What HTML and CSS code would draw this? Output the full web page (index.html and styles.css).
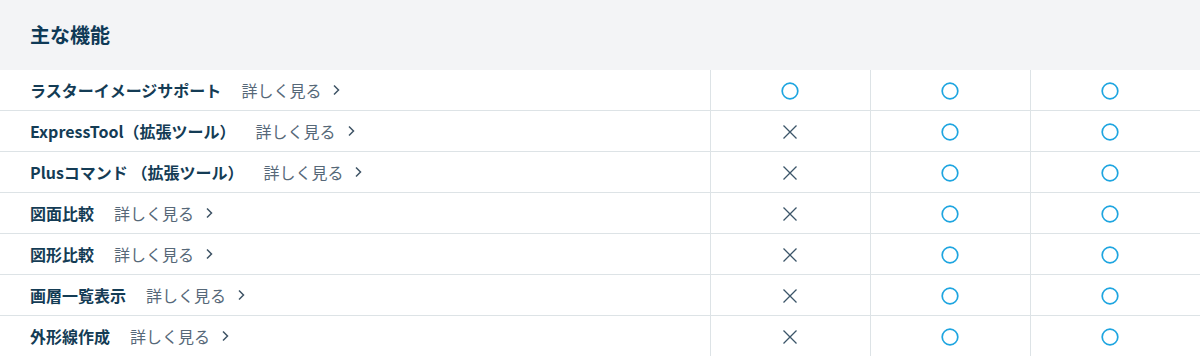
FILE: index.html
```html
<!DOCTYPE html>
<html lang="ja">
<head>
<meta charset="utf-8">
<link rel="stylesheet" href="styles.css">
</head>
<body>
<section class="features">
  <div class="features-head">
    <h2 class="features-title">主な機能</h2>
  </div>
  <div class="features-table">
    <div class="row">
      <div class="cell name"><span class="label">ラスターイメージサポート</span><a class="more" href="#">詳しく見る<svg class="chev" viewBox="0 0 8 12" width="8" height="12"><path d="M2 1.5 L6.5 6 L2 10.5" fill="none" stroke="currentColor" stroke-width="1.5"/></svg></a></div>
      <div class="cell mark"><svg class="yes" viewBox="0 0 20 20" width="20" height="20"><circle cx="10" cy="10" r="7.8" fill="none" stroke="currentColor" stroke-width="1.7"/></svg></div>
      <div class="cell mark"><svg class="yes" viewBox="0 0 20 20" width="20" height="20"><circle cx="10" cy="10" r="7.8" fill="none" stroke="currentColor" stroke-width="1.7"/></svg></div>
      <div class="cell mark"><svg class="yes" viewBox="0 0 20 20" width="20" height="20"><circle cx="10" cy="10" r="7.8" fill="none" stroke="currentColor" stroke-width="1.7"/></svg></div>
    </div>
    <div class="row">
      <div class="cell name"><span class="label">ExpressTool（拡張ツール）</span><a class="more" href="#">詳しく見る<svg class="chev" viewBox="0 0 8 12" width="8" height="12"><path d="M2 1.5 L6.5 6 L2 10.5" fill="none" stroke="currentColor" stroke-width="1.5"/></svg></a></div>
      <div class="cell mark"><svg class="no" viewBox="0 0 20 20" width="20" height="20"><path d="M3.5 3.5 L16.5 16.5 M16.5 3.5 L3.5 16.5" fill="none" stroke="currentColor" stroke-width="1.3"/></svg></div>
      <div class="cell mark"><svg class="yes" viewBox="0 0 20 20" width="20" height="20"><circle cx="10" cy="10" r="7.8" fill="none" stroke="currentColor" stroke-width="1.7"/></svg></div>
      <div class="cell mark"><svg class="yes" viewBox="0 0 20 20" width="20" height="20"><circle cx="10" cy="10" r="7.8" fill="none" stroke="currentColor" stroke-width="1.7"/></svg></div>
    </div>
    <div class="row">
      <div class="cell name"><span class="label">Plusコマンド （拡張ツール）</span><a class="more" href="#">詳しく見る<svg class="chev" viewBox="0 0 8 12" width="8" height="12"><path d="M2 1.5 L6.5 6 L2 10.5" fill="none" stroke="currentColor" stroke-width="1.5"/></svg></a></div>
      <div class="cell mark"><svg class="no" viewBox="0 0 20 20" width="20" height="20"><path d="M3.5 3.5 L16.5 16.5 M16.5 3.5 L3.5 16.5" fill="none" stroke="currentColor" stroke-width="1.3"/></svg></div>
      <div class="cell mark"><svg class="yes" viewBox="0 0 20 20" width="20" height="20"><circle cx="10" cy="10" r="7.8" fill="none" stroke="currentColor" stroke-width="1.7"/></svg></div>
      <div class="cell mark"><svg class="yes" viewBox="0 0 20 20" width="20" height="20"><circle cx="10" cy="10" r="7.8" fill="none" stroke="currentColor" stroke-width="1.7"/></svg></div>
    </div>
    <div class="row">
      <div class="cell name"><span class="label">図面比較</span><a class="more" href="#">詳しく見る<svg class="chev" viewBox="0 0 8 12" width="8" height="12"><path d="M2 1.5 L6.5 6 L2 10.5" fill="none" stroke="currentColor" stroke-width="1.5"/></svg></a></div>
      <div class="cell mark"><svg class="no" viewBox="0 0 20 20" width="20" height="20"><path d="M3.5 3.5 L16.5 16.5 M16.5 3.5 L3.5 16.5" fill="none" stroke="currentColor" stroke-width="1.3"/></svg></div>
      <div class="cell mark"><svg class="yes" viewBox="0 0 20 20" width="20" height="20"><circle cx="10" cy="10" r="7.8" fill="none" stroke="currentColor" stroke-width="1.7"/></svg></div>
      <div class="cell mark"><svg class="yes" viewBox="0 0 20 20" width="20" height="20"><circle cx="10" cy="10" r="7.8" fill="none" stroke="currentColor" stroke-width="1.7"/></svg></div>
    </div>
    <div class="row">
      <div class="cell name"><span class="label">図形比較</span><a class="more" href="#">詳しく見る<svg class="chev" viewBox="0 0 8 12" width="8" height="12"><path d="M2 1.5 L6.5 6 L2 10.5" fill="none" stroke="currentColor" stroke-width="1.5"/></svg></a></div>
      <div class="cell mark"><svg class="no" viewBox="0 0 20 20" width="20" height="20"><path d="M3.5 3.5 L16.5 16.5 M16.5 3.5 L3.5 16.5" fill="none" stroke="currentColor" stroke-width="1.3"/></svg></div>
      <div class="cell mark"><svg class="yes" viewBox="0 0 20 20" width="20" height="20"><circle cx="10" cy="10" r="7.8" fill="none" stroke="currentColor" stroke-width="1.7"/></svg></div>
      <div class="cell mark"><svg class="yes" viewBox="0 0 20 20" width="20" height="20"><circle cx="10" cy="10" r="7.8" fill="none" stroke="currentColor" stroke-width="1.7"/></svg></div>
    </div>
    <div class="row">
      <div class="cell name"><span class="label">画層一覧表示</span><a class="more" href="#">詳しく見る<svg class="chev" viewBox="0 0 8 12" width="8" height="12"><path d="M2 1.5 L6.5 6 L2 10.5" fill="none" stroke="currentColor" stroke-width="1.5"/></svg></a></div>
      <div class="cell mark"><svg class="no" viewBox="0 0 20 20" width="20" height="20"><path d="M3.5 3.5 L16.5 16.5 M16.5 3.5 L3.5 16.5" fill="none" stroke="currentColor" stroke-width="1.3"/></svg></div>
      <div class="cell mark"><svg class="yes" viewBox="0 0 20 20" width="20" height="20"><circle cx="10" cy="10" r="7.8" fill="none" stroke="currentColor" stroke-width="1.7"/></svg></div>
      <div class="cell mark"><svg class="yes" viewBox="0 0 20 20" width="20" height="20"><circle cx="10" cy="10" r="7.8" fill="none" stroke="currentColor" stroke-width="1.7"/></svg></div>
    </div>
    <div class="row">
      <div class="cell name"><span class="label">外形線作成</span><a class="more" href="#">詳しく見る<svg class="chev" viewBox="0 0 8 12" width="8" height="12"><path d="M2 1.5 L6.5 6 L2 10.5" fill="none" stroke="currentColor" stroke-width="1.5"/></svg></a></div>
      <div class="cell mark"><svg class="no" viewBox="0 0 20 20" width="20" height="20"><path d="M3.5 3.5 L16.5 16.5 M16.5 3.5 L3.5 16.5" fill="none" stroke="currentColor" stroke-width="1.3"/></svg></div>
      <div class="cell mark"><svg class="yes" viewBox="0 0 20 20" width="20" height="20"><circle cx="10" cy="10" r="7.8" fill="none" stroke="currentColor" stroke-width="1.7"/></svg></div>
      <div class="cell mark"><svg class="yes" viewBox="0 0 20 20" width="20" height="20"><circle cx="10" cy="10" r="7.8" fill="none" stroke="currentColor" stroke-width="1.7"/></svg></div>
    </div>
  </div>
</section>
</body>
</html>
```

FILE: styles.css
```css
* { box-sizing: border-box; }
html, body { margin: 0; padding: 0; background: #ffffff; }
body {
  font-family: "Noto Sans CJK JP", "Noto Sans", sans-serif;
  color: #143c55;
}
.features-head {
  height: 70px;
  background: #f3f4f6;
  display: flex;
  align-items: center;
  padding-left: 30px;
}
.features-title {
  margin: 0;
  font-size: 20px;
  font-weight: 700;
  line-height: 1;
  color: #0f3a57;
}
.row {
  display: grid;
  grid-template-columns: 710px 160px 160px 160px;
  border-bottom: 1px solid #dde3e6;
}
.cell {
  height: 40px;
  display: flex;
  align-items: center;
}
.name {
  padding-left: 30px;
}
.label {
  font-size: 16px;
  font-weight: 700;
  color: #143c55;
  line-height: 1;
}
.more {
  margin-left: 20px;
  font-size: 16px;
  color: #566878;
  text-decoration: none;
  display: flex;
  align-items: center;
  line-height: 1;
}
.chev {
  margin-left: 11px;
  color: #3f5466;
}
.mark {
  border-left: 1px solid #dde3e6;
  justify-content: center;
  padding-right: 1px;
  padding-top: 1px;
}
.yes { color: #1ea5e0; }
.no { color: #3b5569; }
```
